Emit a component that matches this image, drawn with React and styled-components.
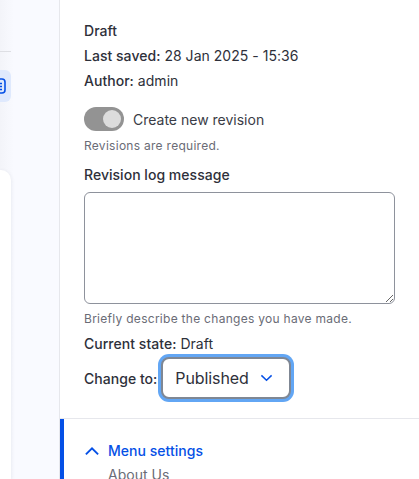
import styled, { createGlobalStyle } from "styled-components";

const Global = createGlobalStyle`
  html, body {
    margin: 0;
    padding: 0;
    height: 100%;
    overflow: hidden;
    background: #ffffff;
    font-family: Inter, "Liberation Sans", sans-serif;
  }
  * { box-sizing: border-box; }
`;

const Page = styled.div`
  width: 419px;
  height: 479px;
  display: flex;
  overflow: hidden;
`;

const Rail = styled.div`
  width: 60px;
  flex: none;
  background: #f9faff;
  border-right: 1px solid #e6e7ec;
  display: flex;
  flex-direction: column;
  background-image: linear-gradient(to right, #f3f4f9, #f9faff 14px);
`;

const RailRule = styled.div`
  height: 1px;
  width: 11px;
  margin-top: 51px;
  background: #dedfe4;
`;

const RailTab = styled.div`
  width: 11px;
  height: 32px;
  margin-top: 18px;
  background: #dfe9fd;
  border-radius: 0 6px 6px 0;
  overflow: hidden;
  position: relative;
`;

const TabIcon = styled.svg`
  position: absolute;
  left: -10px;
  top: 7px;
`;

const RailCard = styled.div`
  width: 11px;
  flex: 1;
  margin-top: 68px;
  background: #ffffff;
  border-radius: 0 10px 0 0;
  box-shadow: 0 1px 4px rgba(40, 45, 80, 0.1);
`;

const Panel = styled.div`
  flex: 1;
  display: flex;
  flex-direction: column;
  min-height: 0;
`;

const Meta = styled.div`
  flex: none;
  padding: 18px 24px 0;
  height: 419px;
  border-bottom: 1px solid #e6e7ec;
  color: #2e303a;
  font-size: 14px;
  letter-spacing: 0.03px;
`;

const Line = styled.div`
  height: 25px;
  line-height: 25px;
  white-space: nowrap;
`;

const Strong = styled.span`
  font-weight: 500;
`;

const ToggleRow = styled.div`
  display: flex;
  align-items: center;
  gap: 9px;
  margin-top: 14px;
  height: 24px;
`;

const Toggle = styled.div`
  width: 40px;
  height: 24px;
  border-radius: 12px;
  background: #939393;
  display: flex;
  align-items: center;
  justify-content: flex-end;
  padding-right: 3px;
`;

const Knob = styled.div`
  width: 18px;
  height: 18px;
  border-radius: 50%;
  background: #dcdcdc;
`;

const ToggleLabel = styled.span`
  color: #3a3c46;
  letter-spacing: 0;
`;

const Hint = styled.div`
  font-size: 12px;
  line-height: 18px;
  color: #6a6c76;
  letter-spacing: 0.28px;
  margin-top: ${(p) => p.$top}px;
  white-space: nowrap;
`;

const FieldLabel = styled.div`
  font-weight: 500;
  line-height: 20px;
  margin-top: 10px;
`;

const LogBox = styled.textarea`
  display: block;
  width: 311px;
  height: 112px;
  margin-top: 7px;
  border: 1px solid #8e929c;
  border-radius: 6px;
  background: #ffffff;
  outline: none;
`;

const StateLine = styled(Line)`
  margin-top: 3px;
`;

const ChangeRow = styled.div`
  display: flex;
  align-items: center;
  gap: 4px;
  margin-top: 1px;
  white-space: nowrap;
`;

const Select = styled.div`
  width: 130px;
  height: 42px;
  display: flex;
  align-items: center;
  gap: 11px;
  padding-left: 12px;
  font-size: 16px;
  letter-spacing: -0.1px;
  color: #2e303a;
  background: #ffffff;
  border: 2px solid #7f8794;
  border-radius: 8px;
  box-shadow: 0 0 0 3px #62a6f4;
`;

const Section = styled.div`
  flex: 1;
  border-left: 4px solid #0550e6;
  padding: 23px 0 0 20px;
  font-size: 14px;
  letter-spacing: 0.03px;
`;

const SectionTitle = styled.div`
  display: flex;
  align-items: center;
  gap: 8px;
  color: #0550e6;
  font-weight: 500;
  line-height: 17px;
`;

const SectionValue = styled.div`
  color: #6a6c76;
  margin-left: 24px;
  line-height: 17px;
  margin-top: 7px;
`;

export default function App() {
  return (
    <Page>
      <Global />
      <Rail>
        <RailRule />
        <RailTab>
          <TabIcon width="18" height="18" viewBox="0 0 18 18" fill="none" stroke="#0550e6" strokeWidth="1.6">
            <rect x="3" y="2" width="12" height="14" rx="3" />
            <path d="M6 6.500h6M6 9.500h6M6 12.500h6" />
          </TabIcon>
        </RailTab>
        <RailCard />
      </Rail>
      <Panel>
        <Meta>
          <Line><Strong>Draft</Strong></Line>
          <Line><Strong>Last saved:</Strong> 28 Jan 2025 - 15:36</Line>
          <Line><Strong>Author:</Strong> admin</Line>
          <ToggleRow>
            <Toggle><Knob /></Toggle>
            <ToggleLabel>Create new revision</ToggleLabel>
          </ToggleRow>
          <Hint $top={6}>Revisions are required.</Hint>
          <FieldLabel>Revision log message</FieldLabel>
          <LogBox />
          <Hint $top={6}>Briefly describe the changes you have made.</Hint>
          <StateLine><Strong>Current state:</Strong> Draft</StateLine>
          <ChangeRow>
            <Strong>Change to:</Strong>
            <Select>
              Published
              <svg width="13" height="8" viewBox="0 0 14 8" fill="none" stroke="#0550e6" strokeWidth="1.6">
                <path d="M1.500 1.200 7 6.500l5.500-5.300" />
              </svg>
            </Select>
          </ChangeRow>
        </Meta>
        <Section>
          <SectionTitle>
            <svg width="16" height="10" viewBox="0 0 14 9" fill="none" stroke="#0550e6" strokeWidth="1.7">
              <path d="M1.500 7.500 7 2l5.500 5.500" />
            </svg>
            Menu settings
          </SectionTitle>
          <SectionValue>About Us</SectionValue>
        </Section>
      </Panel>
    </Page>
  );
}
